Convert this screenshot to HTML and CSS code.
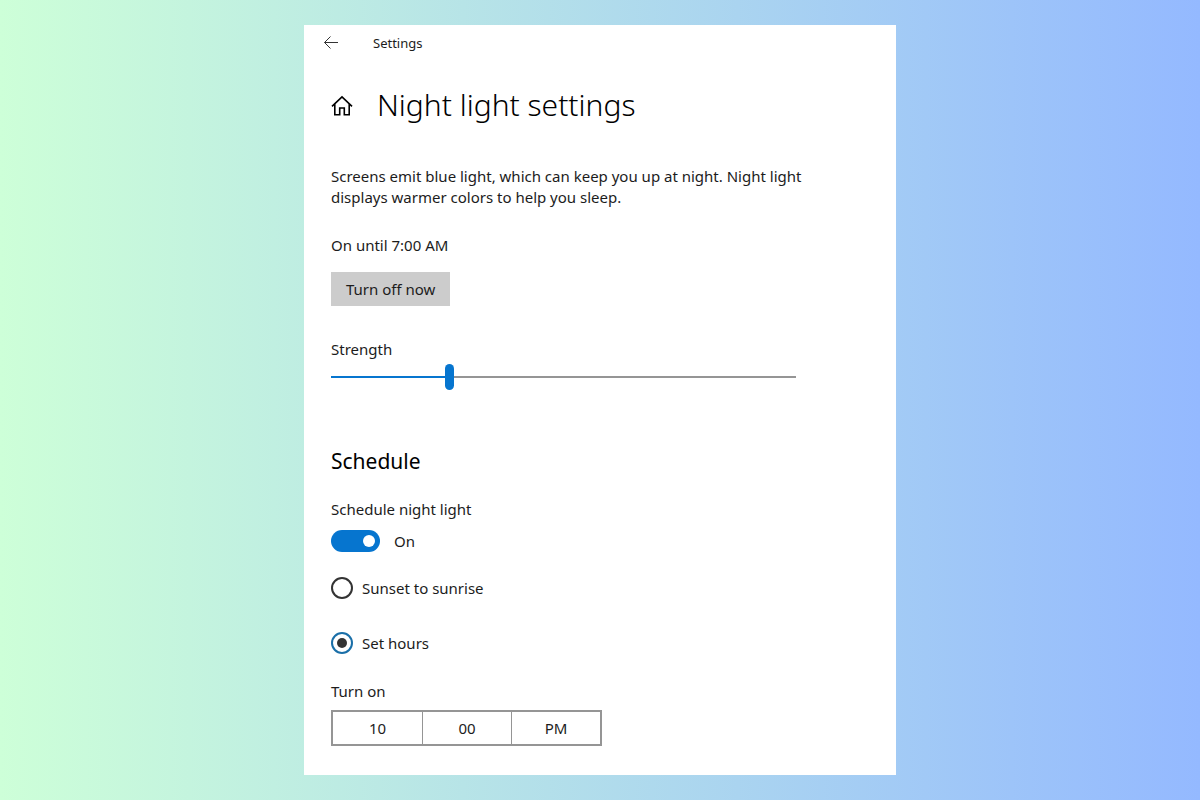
FILE: index.html
```
<!DOCTYPE html>
<html lang="en">
<head>
    <meta charset="UTF-8">
    <meta name="viewport" content="width=device-width, initial-scale=1.0">
    <title>Settings</title>
    <link rel="stylesheet" href="styles.css">
</head>
<body>
    <main class="window">
        <header class="topbar">
            <button class="back" type="button" aria-label="Back">
                <svg width="16" height="16" viewBox="0 0 16 16" fill="none" stroke="currentColor">
                    <path d="M15 7.500H1.500M7.500 1.500L1.500 7.500l6 6"/>
                </svg>
            </button>
            <span>Settings</span>
        </header>

        <div class="title">
            <a class="home" href="#" aria-label="Home">
                <svg width="22" height="22" viewBox="0 0 22 22" fill="none" stroke="currentColor" stroke-width="1.6">
                    <path d="M1 12.300L11 2.800l10 9.500M3.800 10V20.700H8.700V14H13.300V20.700H18.200V10"/>
                </svg>
            </a>
            <h1>Night light settings</h1>
        </div>

        <div class="content">
            <p class="intro">Screens emit blue light, which can keep you up at night. Night light displays warmer colors to help you sleep.</p>
            <p class="status">On until 7:00 AM</p>
            <button class="turn-off" type="button">Turn off now</button>

            <label class="strength-label" for="strength">Strength</label>
            <input class="slider" id="strength" type="range" min="0" max="100" value="25">

            <h2>Schedule</h2>
            <label class="schedule-label" for="schedule">Schedule night light</label>
            <div class="toggle-row">
                <input class="toggle" id="schedule" type="checkbox" role="switch" checked>
                <span>On</span>
            </div>

            <div class="options">
                <label class="option"><input class="radio" type="radio" name="hours"> Sunset to sunrise</label>
                <label class="option"><input class="radio" type="radio" name="hours" checked> Set hours</label>
            </div>

            <div class="turn-on" id="turn-on">Turn on</div>
            <div class="time" role="group" aria-labelledby="turn-on">
                <select aria-label="Hour"><option>10</option><option>11</option></select>
                <select aria-label="Minute"><option>00</option><option>15</option><option>30</option><option>45</option></select>
                <select aria-label="AM or PM"><option>PM</option><option>AM</option></select>
            </div>
        </div>
    </main>
</body>
</html>
```
FILE: styles.css
```
*,*::after,*::before{
    box-sizing: border-box;
}
:root{
    --accent:#0675cf;
    --line:#959595;
}
body{
    margin: 0;
    min-height: 100vh;
    padding: 25px 16px;
    background: linear-gradient(90deg, #cdffd8, #94b9ff);
    color: #1c1c1c;
    font-family: "Noto Sans", "Segoe UI", sans-serif;
    font-size: 15px;
    line-height: 21px;
}
h1,h2,p{
    margin: 0;
}
button,select,input{
    margin: 0;
    font: inherit;
    color: inherit;
}
.window{
    max-width: 592px;
    margin: 0 auto;
    padding-bottom: 29px;
    background-color: white;
}
.topbar{
    display: flex;
    align-items: center;
    gap: 34px;
    height: 36px;
    padding-left: 19px;
    font-size: 13px;
}
.back{
    display: flex;
    padding: 0;
    border: none;
    background: none;
    color: #333333;
    cursor: pointer;
}
.title{
    display: flex;
    align-items: center;
    gap: 24px;
    margin-top: 22px;
    padding-left: 27px;
}
.home{
    display: flex;
    color: black;
}
h1{
    font-size: 30px;
    font-weight: 300;
    line-height: 44px;
    color: black;
}
.content{
    display: flex;
    flex-direction: column;
    align-items: flex-start;
    max-width: 540px;
    padding: 39px 27px 0;
}
.status{
    margin-top: 27px;
}
.turn-off{
    margin-top: 16px;
    height: 34px;
    padding: 0 15px;
    border: none;
    background-color: #cccccc;
    cursor: pointer;
}
.strength-label{
    margin-top: 33px;
}
.slider{
    appearance: none;
    width: 100%;
    max-width: 465px;
    height: 26px;
    margin-top: 4px;
    background: none;
}
.slider::-webkit-slider-runnable-track{
    height: 2px;
    background: linear-gradient(90deg, var(--accent) 25%, var(--line) 25%);
}
.slider::-webkit-slider-thumb{
    appearance: none;
    width: 9px;
    height: 26px;
    margin-top: -12px;
    border-radius: 5px;
    background-color: var(--accent);
}
h2{
    margin-top: 56px;
    font-size: 21px;
    font-weight: 400;
    line-height: 30px;
    color: black;
}
.schedule-label{
    margin-top: 23px;
}
.toggle-row{
    display: flex;
    align-items: center;
    gap: 14px;
    margin-top: 10px;
}
.toggle{
    appearance: none;
    display: flex;
    align-items: center;
    justify-content: flex-end;
    width: 49px;
    height: 22px;
    padding: 5px;
    border-radius: 11px;
    background-color: var(--accent);
}
.toggle::before{
    content: '';
    width: 12px;
    height: 12px;
    border-radius: 50%;
    background-color: white;
}
.toggle:not(:checked){
    justify-content: flex-start;
    background-color: var(--line);
}
.options{
    display: grid;
    gap: 33px;
    margin-top: 25px;
}
.option{
    display: flex;
    align-items: center;
    gap: 9px;
}
.radio{
    appearance: none;
    display: grid;
    place-items: center;
    width: 22px;
    height: 22px;
    border: 2px solid #333333;
    border-radius: 50%;
}
.radio:checked{
    border-color: #1a6fa8;
}
.radio:checked::before{
    content: '';
    width: 10px;
    height: 10px;
    border-radius: 50%;
    background-color: #333333;
}
.turn-on{
    margin-top: 27px;
}
.time{
    display: grid;
    grid-template-columns: repeat(3, 1fr);
    width: 271px;
    max-width: 100%;
    margin-top: 8px;
    border: 2px solid var(--line);
}
.time select{
    appearance: none;
    height: 32px;
    padding: 0;
    border: none;
    border-radius: 0;
    background-color: white;
    text-align: center;
    text-align-last: center;
}
.time select + select{
    border-left: 1px solid var(--line);
}
```
